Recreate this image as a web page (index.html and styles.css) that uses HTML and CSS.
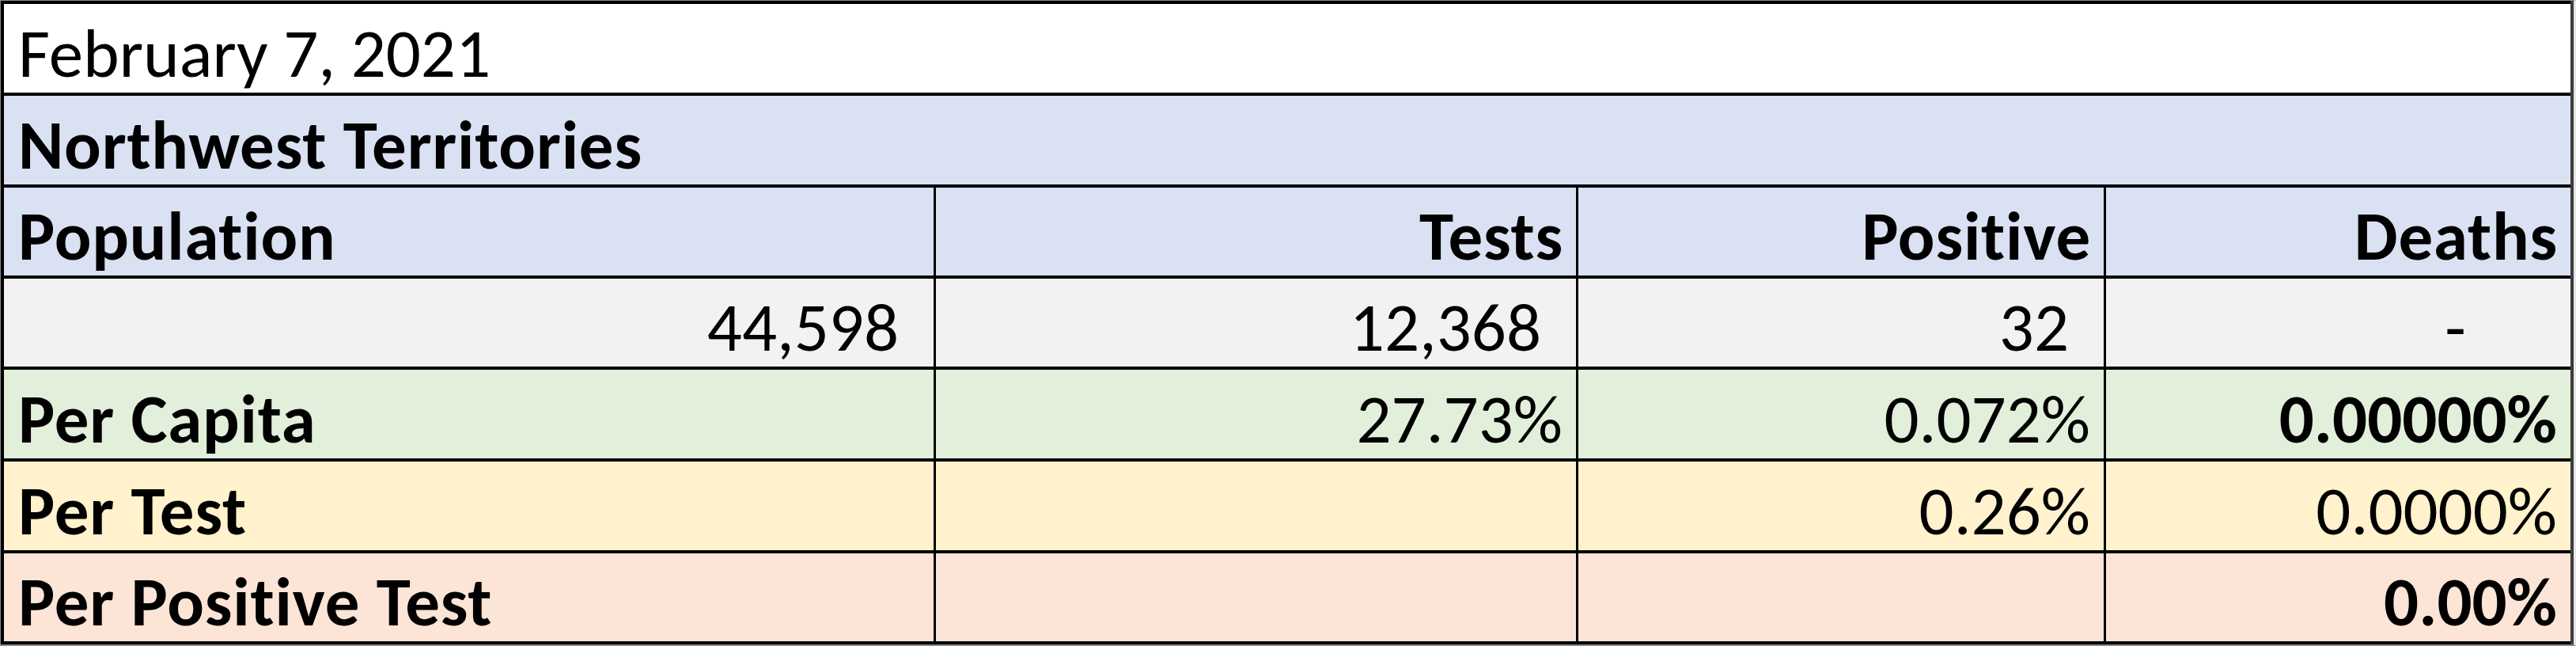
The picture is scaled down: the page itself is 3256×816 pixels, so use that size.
FILE: index.html
```html
<!DOCTYPE html>
<html lang="en">
<head>
<meta charset="utf-8">
<title>Northwest Territories – February 7, 2021</title>
<link rel="stylesheet" href="styles.css">
</head>
<body>
<div class="frame">
  <div class="sheet">
    <div class="cell span white">February 7, 2021</div>
    <div class="cell span blue bold">Northwest Territories</div>

    <div class="cell blue bold">Population</div>
    <div class="cell blue bold right hdr">Tests</div>
    <div class="cell blue bold right hdr">Positive</div>
    <div class="cell blue bold right hdr">Deaths</div>

    <div class="cell grey right num">44,598</div>
    <div class="cell grey right num">12,368</div>
    <div class="cell grey right num">32</div>
    <div class="cell grey right dash">-</div>

    <div class="cell green bold">Per Capita</div>
    <div class="cell green right pct">27.73%</div>
    <div class="cell green right pct">0.072%</div>
    <div class="cell green right pct bold figure">0.00000%</div>

    <div class="cell yellow bold">Per Test</div>
    <div class="cell yellow"></div>
    <div class="cell yellow right pct">0.26%</div>
    <div class="cell yellow right pct">0.0000%</div>

    <div class="cell peach bold">Per Positive Test</div>
    <div class="cell peach"></div>
    <div class="cell peach"></div>
    <div class="cell peach right pct bold figure">0.00%</div>
  </div>
</div>
</body>
</html>
```

FILE: styles.css
```css
html, body {
  margin: 0;
  padding: 0;
  background: #ffffff;
}

.frame {
  width: 3256px;
  height: 816px;
  box-sizing: border-box;
  border-top: 1px solid #8a8a8a;
  border-left: 1px solid #8a8a8a;
  border-bottom: 2px solid #8a8a8a;
  border-right: 3px solid #e6e6e6;
  background: #8a8a8a;
}

.sheet {
  display: grid;
  grid-template-columns: 1175px 809px 664px 587px;
  grid-template-rows: 112px 112px 111px 111px 112px 112px 111px;
  gap: 4px 3px;
  padding: 4px 0 4px 4px;
  border-right: 4px solid #3c3c3c;
  background: #000000;
  font-family: Carlito, "Open Sans", sans-serif;
  font-size: 87px;
  line-height: 1.1;
  color: #000000;
}

.cell {
  display: flex;
  align-items: flex-end;
  padding: 0 0 1px 18px;
  white-space: nowrap;
}

.span { grid-column: 1 / -1; }

.bold {
  font-weight: 700;
  letter-spacing: 0.8px;
}
.bold.figure { letter-spacing: 0; }

.right {
  justify-content: flex-end;
  padding-left: 0;
}
.hdr { padding-right: 16px; }
.num { padding-right: 44px; }
.pct { padding-right: 17px; }
.dash { padding-right: 132px; }

.white { background: #ffffff; }
.blue { background: #d9e1f2; }
.grey { background: #f2f2f2; }
.green { background: #e2efda; }
.yellow { background: #fff2cc; }
.peach { background: #fce4d6; }
```
